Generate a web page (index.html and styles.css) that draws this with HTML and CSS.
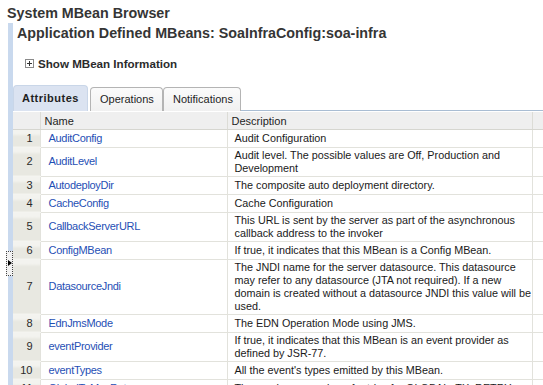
FILE: index.html
```
<!DOCTYPE html>
<html>
<head>
<meta charset="utf-8">
<link rel="stylesheet" href="styles.css">
</head>
<body>
<div class="page">
  <h1 class="title">System MBean Browser</h1>
  <div class="panel">
    <h2 class="subtitle">Application Defined MBeans: SoaInfraConfig:soa-infra</h2>
    <div class="info"><span class="plusbox"></span><span>Show MBean Information</span></div>
    <div class="tabs">
      <div class="tab selected">Attributes</div>
      <div class="tab ops">Operations</div>
      <div class="tab notif">Notifications</div>
      <div class="tabfill"></div>
    </div>
    <table class="grid">
      <colgroup>
        <col class="c-num"><col class="c-name"><col class="c-desc"><col class="c-extra">
      </colgroup>
      <thead>
        <tr><th class="num"></th><th>Name</th><th>Description</th><th class="extra"><span class="mark"></span></th></tr>
      </thead>
      <tbody>
        <tr><td class="num">1</td><td class="name">AuditConfig</td><td class="desc">Audit Configuration</td><td></td></tr>
        <tr><td class="num">2</td><td class="name">AuditLevel</td><td class="desc">Audit level. The possible values are Off, Production and<br>Development</td><td></td></tr>
        <tr><td class="num">3</td><td class="name">AutodeployDir</td><td class="desc">The composite auto deployment directory.</td><td></td></tr>
        <tr><td class="num">4</td><td class="name">CacheConfig</td><td class="desc">Cache Configuration</td><td></td></tr>
        <tr><td class="num">5</td><td class="name">CallbackServerURL</td><td class="desc">This URL is sent by the server as part of the asynchronous<br>callback address to the invoker</td><td></td></tr>
        <tr><td class="num">6</td><td class="name">ConfigMBean</td><td class="desc">If true, it indicates that this MBean is a Config MBean.</td><td></td></tr>
        <tr><td class="num">7</td><td class="name">DatasourceJndi</td><td class="desc">The JNDI name for the server datasource. This datasource<br>may refer to any datasource (JTA not required). If a new<br>domain is created without a datasource JNDI this value will be<br>used.</td><td></td></tr>
        <tr><td class="num">8</td><td class="name">EdnJmsMode</td><td class="desc">The EDN Operation Mode using JMS.</td><td></td></tr>
        <tr><td class="num">9</td><td class="name">eventProvider</td><td class="desc">If true, it indicates that this MBean is an event provider as<br>defined by JSR-77.</td><td></td></tr>
        <tr><td class="num">10</td><td class="name">eventTypes</td><td class="desc">All the event's types emitted by this MBean.</td><td></td></tr>
        <tr><td class="num">11</td><td class="name">GlobalTxMaxRetry</td><td class="desc">The maximum number of retries for GLOBAL_TX_RETRY.</td><td></td></tr>
      </tbody>
    </table>
  </div>
  <div class="handle"><span class="arrow"></span></div>
</div>
</body>
</html>
```
FILE: styles.css
```
html, body {
  margin: 0;
  padding: 0;
  overflow: hidden;
  background: #ffffff;
}
.page {
  position: relative;
  width: 543px;
  height: 385px;
  overflow: hidden;
  font-family: "Liberation Sans", Arial, sans-serif;
  font-size: 11px;
  color: #1e1e1e;
}
.title {
  margin: 4px 0 0 7px;
  font-size: 14.3px;
  line-height: 18px;
  font-weight: bold;
  color: #353535;
}
.panel {
  margin: 1px 0 0 8px;
  border-left: 5px solid #c9d9ee;
  padding-left: 0;
  height: 400px;
}
.subtitle {
  margin: 0 0 0 4px;
  padding-top: 1px;
  font-size: 14.3px;
  line-height: 18px;
  font-weight: bold;
  color: #353535;
}
.info {
  display: flex;
  align-items: center;
  margin: 14px 0 0 12px;
  height: 14px;
  font-size: 11.6px;
  font-weight: bold;
  color: #2b2b2b;
}
.plusbox {
  position: relative;
  width: 7px;
  height: 7px;
  border: 1px solid #8a8a8a;
  margin-right: 4px;
  background: #fff;
}
.plusbox::before {
  content: "";
  position: absolute;
  left: 1px; top: 3px;
  width: 5px; height: 1px;
  background: #333;
}
.plusbox::after {
  content: "";
  position: absolute;
  left: 3px; top: 1px;
  width: 1px; height: 5px;
  background: #333;
}
.tabs {
  display: flex;
  align-items: flex-end;
  margin-top: 15px;
  height: 26px;
}
.tab {
  height: 24px;
  border: 1px solid #b4b4b4;
  border-bottom: none;
  border-radius: 4px 4px 0 0;
  background: linear-gradient(#fbfbfb, #f0f0f0);
  line-height: 22px;
  font-size: 11px;
  color: #1e1e1e;
  box-sizing: border-box;
}
.tab.selected {
  height: 26px;
  width: 75px;
  margin-right: 2px;
  padding-left: 8px;
  border-color: #c9d6e8;
  background: #dbe3f1;
  font-weight: bold;
  letter-spacing: 0.5px;
  line-height: 25px;
}
.tab.ops { width: 73px; padding-left: 9px; }
.tab.notif { width: 78px; padding-left: 9px; }
.tabfill {
  flex: 1;
  border-bottom: 1px solid #a9bdd3;
}
.grid {
  margin-top: 1px;
  border-collapse: collapse;
  table-layout: fixed;
  width: 560px;
}
.c-num { width: 27px; }
.c-name { width: 187px; }
.c-desc { width: 305px; }
.c-extra { width: 41px; }
.grid thead tr {
  height: 17px;
}
.grid th {
  padding: 2px 0 0 4px;
  background: #efefef;
  border-left: 1px solid #dcdcd6;
  border-bottom: 1px solid #d6d6d0;
  text-align: left;
  font-weight: normal;
  line-height: 13px;
  color: #1e1e1e;
  position: relative;
}
.grid th.num { border-left: none; }
.mark {
  position: absolute;
  left: 10px;
  top: 10px;
  width: 2px;
  height: 1px;
  background: #e8a020;
}
.grid tbody tr {
  height: 18px;
}
.grid td {
  padding: 1px 0 1px 8px;
  border-left: 1px solid #e2e2dc;
  border-bottom: 1px solid #e2e2dc;
  line-height: 13px;
  vertical-align: middle;
  white-space: nowrap;
  overflow: hidden;
}
.grid td.num {
  border-left: none;
  padding: 0 7px 0 0;
  text-align: right;
  background: linear-gradient(#f3f3ef 0, #f3f3ef 4px, #e8e8e1 7px, #e8e8e1 100%);
  border-bottom: 1px solid #f4f4f0;
  color: #2a2a2a;
}
.grid td.name {
  color: #1f4fb5;
  letter-spacing: -0.3px;
}
.grid td.desc {
  padding-left: 7px;
  font-size: 10.8px;
  color: #1a1a1a;
}
.handle {
  position: absolute;
  left: 6px;
  top: 251px;
  width: 5px;
  height: 23px;
  border: 1px dotted #444;
  background: #f2f2f2;
}
.arrow {
  position: absolute;
  left: 1px;
  top: 8px;
  width: 0;
  height: 0;
  border-top: 3px solid transparent;
  border-bottom: 3px solid transparent;
  border-left: 4px solid #000;
}
```
